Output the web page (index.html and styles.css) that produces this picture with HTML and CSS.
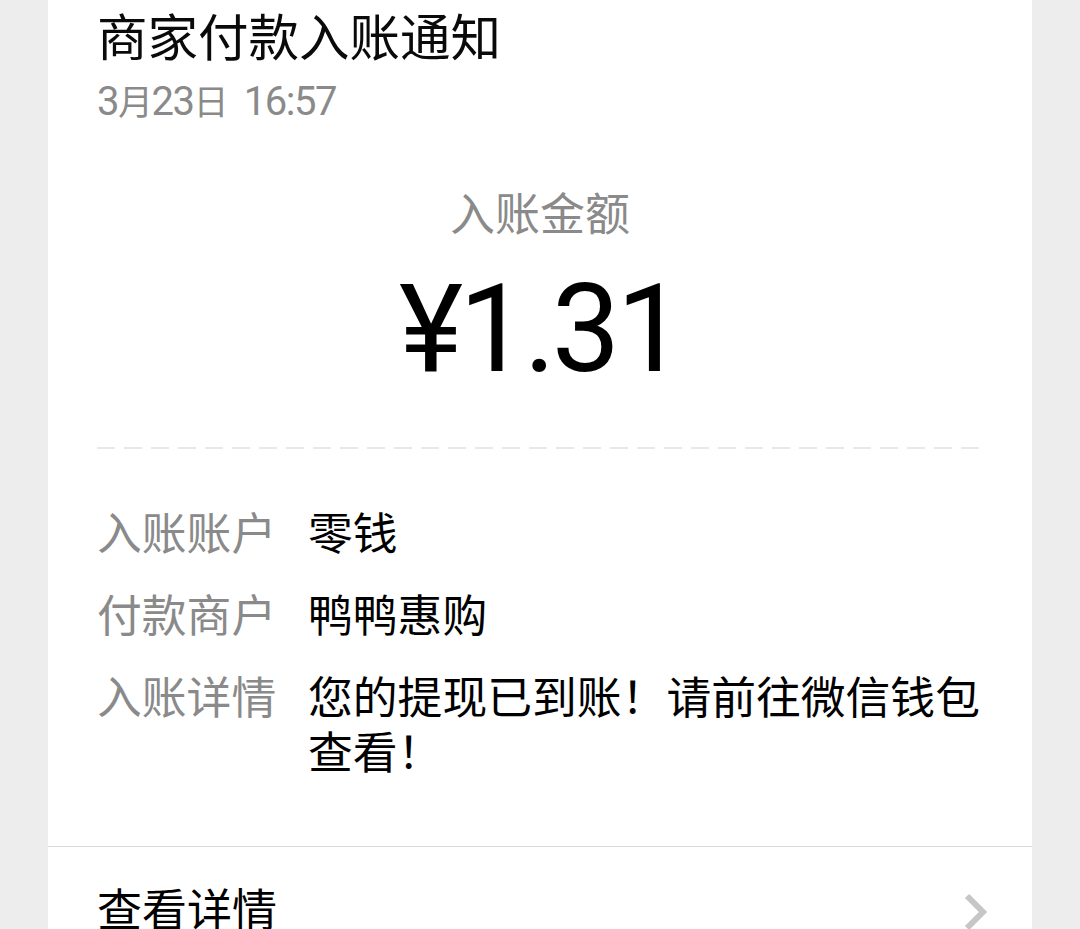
FILE: index.html
```html
<!DOCTYPE html>
<html lang="zh-CN">
<head>
<meta charset="utf-8">
<title>商家付款入账通知</title>
<link rel="stylesheet" href="styles.css">
</head>
<body>
<div class="card">
  <div class="head">
    <div class="title">商家付款入账通知</div>
    <div class="date">3<span class="cjk">月</span>23<span class="cjk">日</span>&nbsp;&nbsp;16:57</div>
  </div>
  <div class="amount-block">
    <div class="amount-label">入账金额</div>
    <div class="amount">¥1.31</div>
  </div>
  <div class="dashed"></div>
  <div class="details">
    <div class="row"><div class="label">入账账户</div><div class="value">零钱</div></div>
    <div class="row"><div class="label">付款商户</div><div class="value">鸭鸭惠购</div></div>
    <div class="row"><div class="label">入账详情</div><div class="value">您的提现已到账！请前往微信钱包查看！</div></div>
  </div>
  <div class="footer">
    <div class="footer-text">查看详情</div>
    <svg class="chev" width="26" height="38" viewBox="0 0 26 38"><path d="M4 3 L20 19 L4 35" fill="none" stroke="#c6c6c9" stroke-width="6"/></svg>
  </div>
</div>
</body>
</html>
```

FILE: styles.css
```css
html, body {
  margin: 0;
  padding: 0;
}
body {
  background: #ededed;
  font-family: Roboto, "Noto Sans CJK SC", sans-serif;
  color: #000;
  height: 929px;
  overflow: hidden;
}
.card {
  margin: 0 48px;
  background: #fff;
  min-height: 929px;
}
.head {
  padding: 9px 45px 0 49px;
}
.title {
  font-size: 50.5px;
  line-height: 60px;
  color: #0a0a0a;
}
.date {
  margin-top: 8px;
  font-size: 40px;
  letter-spacing: -1.5px;
  line-height: 50px;
  height: 50px;
  color: #8a8a8a;
}
.cjk {
  font-size: 35px;
  line-height: 1;
}
.amount-block {
  margin-top: 59px;
  text-align: center;
}
.amount-label {
  font-size: 45px;
  line-height: 60px;
  color: #8a8a8a;
}
.amount {
  margin-top: 14px;
  font-size: 122px;
  letter-spacing: -4px;
  line-height: 140px;
  color: #000;
}
.dashed {
  margin: 47px 45px 0 49px;
  height: 2px;
  background: repeating-linear-gradient(to right, #e8e8e8 0 18px, transparent 18px 27px);
}
.details {
  padding: 58px 45px 0 49px;
  display: flex;
  flex-direction: column;
  gap: 27px;
}
.row {
  display: flex;
  font-size: 44.8px;
  line-height: 55px;
}
.label {
  width: 211px;
  flex: none;
  color: #8a8a8a;
}
.value {
  flex: 1;
  color: #000;
}
.footer {
  margin-top: 65px;
  border-top: 1px solid #dadada;
  padding: 35px 45px 0 49px;
  display: flex;
  align-items: center;
  justify-content: space-between;
}
.footer-text {
  font-size: 45px;
  line-height: 60px;
}
.chev {
  display: block;
  margin-right: -2px;
}
```
